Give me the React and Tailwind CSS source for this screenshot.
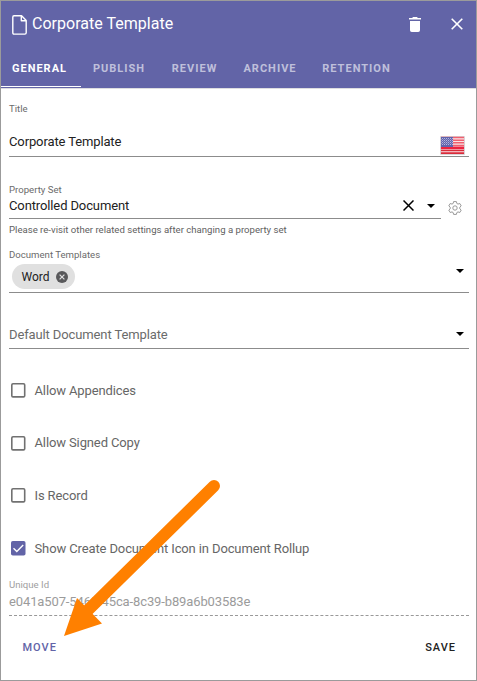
import React from "react";

const tabs = [
  { name: "GENERAL", cls: "w-[80px] text-white border-white" },
  { name: "PUBLISH", cls: "w-[79px] text-white/60 border-transparent" },
  { name: "REVIEW", cls: "w-[72px] text-white/60 border-transparent" },
  { name: "ARCHIVE", cls: "w-[79px] text-white/60 border-transparent" },
  { name: "RETENTION", cls: "w-[94px] text-white/60 border-transparent" },
];

const options = [
  { label: "Allow Appendices", checked: false },
  { label: "Allow Signed Copy", checked: false },
  { label: "Is Record", checked: false },
  { label: "Show Create Document Icon in Document Rollup", checked: true },
];

function Label({ children, className = "" }) {
  return <div className={`h-4 text-[9.6px] leading-4 tracking-normal ${className}`}>{children}</div>;
}

function Caret({ className = "" }) {
  return (
    <svg className={className} width="8" height="4" viewBox="0 0 8 4">
      <path d="M0 0h8L4 4z" fill="#000" />
    </svg>
  );
}

function Flag() {
  return (
    <svg width="25" height="19" viewBox="0 0 25 19">
      <rect width="25" height="19" rx="1" fill="#d9d3d6" />
      <rect x="1" y="1" width="23" height="17" fill="#fae3e6" />
      <path d="M1 1.6h23M1 4.2h23M1 6.8h23M1 9.4h23" stroke="#f0606f" strokeWidth="1.5" />
      <path d="M1 14.5h23M1 17.1h23" stroke="#d92b3a" strokeWidth="1.7" />
      <rect x="1" y="10.6" width="23" height="2.6" fill="#ec2340" />
      <rect x="1" y="1" width="12" height="10" fill="#6264ad" />
      <path d="M2 2.5h11M2 4.5h11M2 6.5h11M2 8.5h11" stroke="#b4b6de" strokeWidth="1" strokeDasharray="1 1" />
      <path d="M1 3.5h12M1 5.5h12M1 7.5h12" stroke="#8c8fc6" strokeWidth="1" strokeDasharray="1 1" />
    </svg>
  );
}

function Gear() {
  return (
    <svg width="14" height="14" viewBox="0 0 14 14" fill="none" stroke="#8d8d8d" strokeWidth="0.9" strokeLinejoin="round">
      <path d="M5.6 .6h2.8l.4 1.8 1.2.7 1.8-.6 1.4 2.4-1.4 1.3v1.6l1.4 1.3-1.4 2.4-1.8-.6-1.2.7-.4 1.8H5.6l-.4-1.8-1.2-.7-1.8.6L.8 9.1l1.4-1.3V6.2L.8 4.9l1.4-2.4 1.8.6 1.2-.7z" />
      <circle cx="7" cy="7" r="2.2" />
    </svg>
  );
}

function Checkbox({ checked }) {
  return (
    <svg width="15" height="15" viewBox="0 0 15 15" fill="none">
      {checked ? (
        <>
          <rect x="0" y="0" width="14.5" height="14.5" rx="1.8" fill="#6264a7" />
          <path d="M2.5 7.3l3.3 3.2 6.4-6.4" stroke="#fff" strokeWidth="1.4" />
        </>
      ) : (
        <rect x="0.8" y="0.8" width="12.9" height="13.1" rx="1.2" stroke="#717171" strokeWidth="1.6" />
      )}
    </svg>
  );
}

export default function App() {
  return (
    <div className="relative flex h-[681px] w-[477px] flex-col border border-[#9b9b9b] bg-white font-['Roboto',sans-serif] text-[13px] tracking-[-0.12px] text-[#222]">
      <header className="h-[88px] shrink-0 border-b border-[#dddde0] bg-[#6264a7] text-white">
        <div className="flex h-[46px] items-center pl-[11px] pr-[13px]">
          <svg width="15" height="20" viewBox="0 0 15 20" fill="none" stroke="#fff" strokeWidth="1.4" strokeLinejoin="round" className="mt-0.5">
            <path d="M2 .8h7.6l4.6 4.7v12.2q0 1.4-1.4 1.4H2q-1.2 0-1.2-1.4V2.2Q.8.8 2 .8zM9.3 1v4.8h4.8" />
          </svg>
          <h1 className="ml-[5px] text-[16px] tracking-[0.02px]">Corporate Template</h1>
          <svg className="ml-auto" width="12" height="15" viewBox="0 0 12 15" fill="#fff">
            <path d="M0 1h3.2L4 0h4l.8 1H12v1.6H0zM1 4h10v9.2q0 1.8-1.8 1.8H2.8Q1 15 1 13.2z" />
          </svg>
          <svg className="ml-[30px]" width="12" height="12" viewBox="0 0 12 12" stroke="#fff" strokeWidth="1.6">
            <path d="M.7.7l10.6 10.6M11.3.7L.7 11.3" />
          </svg>
        </div>
        <nav className="flex h-[40px] text-[11px] font-bold tracking-[1.02px]">
          {tabs.map((t) => (
            <div key={t.name} className={`flex items-center justify-center border-b pr-[3px] pt-[5px] ${t.cls}`}>{t.name}</div>
          ))}
        </nav>
      </header>

      <main className="flex flex-col pl-2 pr-[7px]">
        <Label className="mt-3 text-[#6b6b6b]">Title</Label>
        <div className="mt-[10px] flex h-[30px] items-center justify-between border-b border-[#8c8c8c] pr-1">
          <span>Corporate Template</span>
          <span className="mt-2"><Flag /></span>
        </div>

        <Label className="mt-[25px] text-[#6b6b6b]">Property Set</Label>
        <div className="flex">
          <div className="flex h-[21px] w-[432px] items-center border-b border-[#8c8c8c] pb-[5px] pr-[6px]">
            <span>Controlled Document</span>
            <svg className="ml-auto" width="11" height="11" viewBox="0 0 11 11" stroke="#000" strokeWidth="1.5">
              <path d="M.5.5l10 10M10.5.5l-10 10" />
            </svg>
            <Caret className="ml-[13px]" />
          </div>
          <span className="ml-[7px] mt-[3px]"><Gear /></span>
        </div>
        <Label className="mt-[3px] text-[#5f5f5f]">Please re-visit other related settings after changing a property set</Label>

        <Label className="mt-[9px] text-[#6b6b6b]">Document Templates</Label>
        <div className="flex h-[30px] items-start border-b border-[#8c8c8c] pl-[3px] pr-[5px] pt-px">
          <div className="flex h-[25px] w-[63px] items-center rounded-full bg-[#e0e0e0] pl-[9.5px] text-[12px] tracking-normal">
            <span>Word</span>
            <svg className="ml-[6px]" width="12" height="12" viewBox="0 0 12 12">
              <circle cx="6" cy="6" r="6" fill="#59595b" />
              <path d="M3.6 3.6l4.8 4.8M8.4 3.6l-4.8 4.8" stroke="#e0e0e0" strokeWidth="1.2" />
            </svg>
          </div>
          <Caret className="ml-auto mt-[5px]" />
        </div>

        <div className="mt-[27px] flex h-[29px] items-center justify-between border-b border-[#8c8c8c] pr-[5px] text-[#6b6b6b]">
          <span className="pt-[2px]">Default Document Template</span>
          <Caret />
        </div>

        <div className="mt-[15px] flex h-[211px] flex-col">
          {options.map((o) => (
            <label key={o.label} className="flex flex-1 items-center gap-[8.5px] pl-[2px] text-[#666]">
              <Checkbox checked={o.checked} />
              <span>{o.label}</span>
            </label>
          ))}
        </div>

        <Label className="mt-[2px] text-[#a0a0a0]">Unique Id</Label>
        <div className="flex h-[23px] items-center border-b border-dashed border-[#999] pb-[5px] text-[#9b9b9b]">
          e041a507-5469-45ca-8c39-b89a6b03583e
        </div>
      </main>

      <footer className="flex h-[64px] items-center justify-between pl-[21.5px] pr-[20px] text-[11px] font-medium tracking-[1px]">
        <button className="text-[#6264a7]">MOVE</button>
        <button>SAVE</button>
      </footer>

      <svg className="pointer-events-none absolute -left-px -top-px" width="477" height="681" viewBox="0 0 477 681">
        <path d="M214 486L86 612" stroke="#ff8000" strokeWidth="12" strokeLinecap="round" />
        <path d="M64 636L77 598L102 623.5z" fill="#ff8000" />
      </svg>
    </div>
  );
}
